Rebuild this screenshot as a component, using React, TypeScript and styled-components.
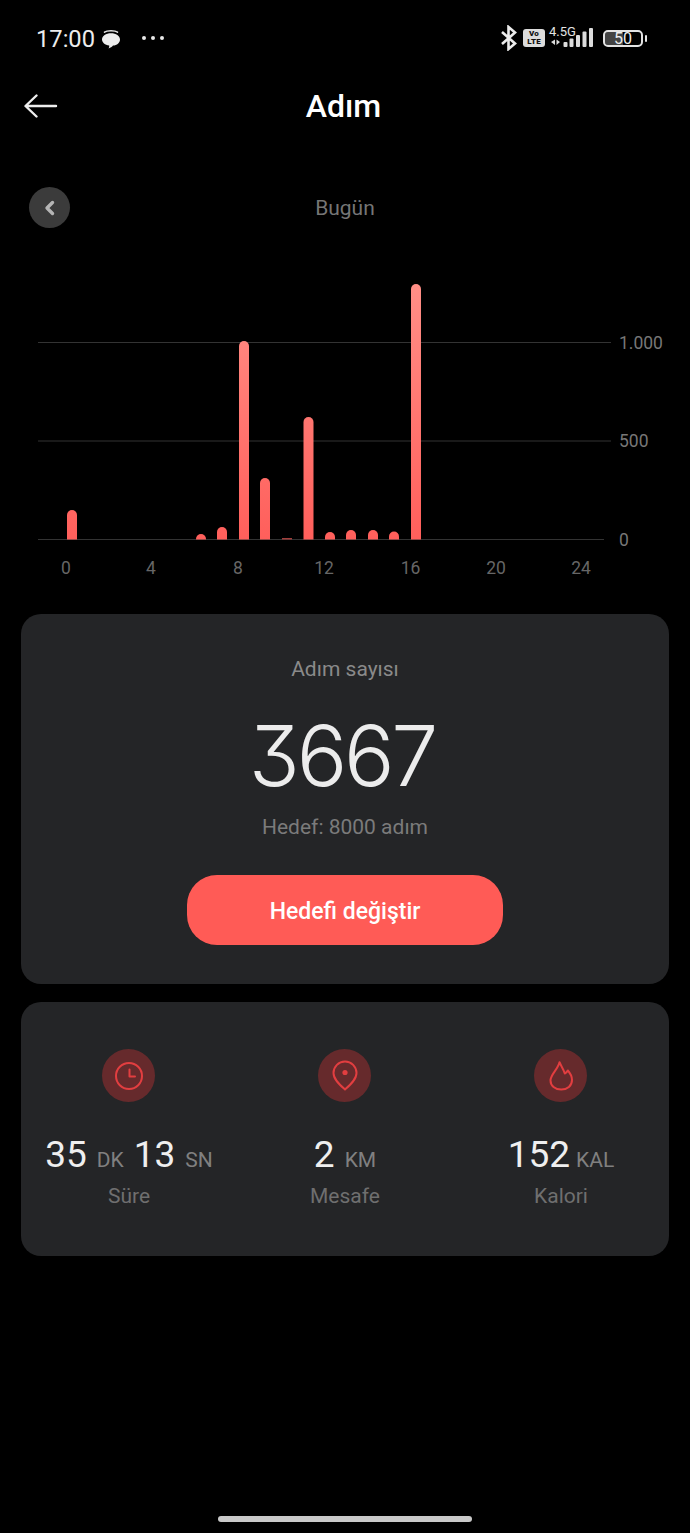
import React from "react";
import styled, { createGlobalStyle } from "styled-components";

const Global = createGlobalStyle`
  html, body { margin: 0; padding: 0; background: #000; }
  body { font-family: Roboto, "Liberation Sans", sans-serif; }
  * { box-sizing: border-box; }
`;

const Page = styled.div`
  width: 690px; height: 1533px; background: #000; display: flex; flex-direction: column; overflow: hidden;
`;
const StatusBar = styled.div`
  height: 76px; padding: 2px 47px 0 36px; display: flex; align-items: center; justify-content: space-between;
`;
const StatusLeft = styled.div`display: flex; align-items: center; color: #ececec;`;
const Time = styled.span`font-size: 23.7px; line-height: 28px; margin-right: 5px;`;
const Dots = styled.svg`margin-left: 19px; margin-top: -2px;`;
const StatusRight = styled.div`display: flex; align-items: center; margin-top: -2px;`;
const Battery = styled.div`
  width: 40px; height: 17px; border: 2px solid #e4e4e4; border-radius: 5px; position: relative; margin-left: 9px;
  background: linear-gradient(90deg, #444 50%, transparent 50%); background-clip: padding-box;
  display: flex; align-items: center; justify-content: center; color: #eee; font-size: 16px; line-height: 13px;
  &::after { content: ""; position: absolute; right: -6px; top: 3px; width: 2.5px; height: 7px; border-radius: 1px; background: #e4e4e4; }
`;
const Volte = styled.div`
  width: 22px; height: 18px; margin-left: 5px; margin-right: 2px; border-radius: 3px; background: #dcdcdc; color: #111; font-size: 8px; line-height: 8px; font-weight: 900;
  display: flex; flex-direction: column; align-items: center; justify-content: center; letter-spacing: .2px;
`;
const Nav = styled.div`
  height: 60px; position: relative; display: flex; align-items: center; justify-content: center; padding: 0 24px;
`;
const BackArrow = styled.svg`position: absolute; left: 24px; top: 17px;`;
const Title = styled.h1`
  margin: 0 3px 0 0; color: #fff; font-size: 32px; line-height: 40px; font-weight: 500;
`;
const DateRow = styled.div`
  margin-top: 51px; height: 42px; position: relative; display: flex; align-items: center; justify-content: center;
  color: #757575; font-size: 21px;
`;
const Prev = styled.div`
  position: absolute; left: 29px; top: 0; width: 41px; height: 41px; border-radius: 50%; background: #3b3b3b;
  display: flex; align-items: center; justify-content: center;
`;
const Chart = styled.svg`display: block; margin-top: 41px; flex: none;`;
const Card = styled.section<{ $h: number }>`
  margin: 0 21px; height: ${p => p.$h}px; background: #242527; border-radius: 20px; flex: none;
`;
const StepCard = styled(Card)`
  margin-top: 24px; padding-top: 43px; display: flex; flex-direction: column; align-items: center;
`;
const CardLabel = styled.div`font-size: 21px; line-height: 24px; color: #8a8a8a;`;
const BigNumber = styled.div`
  margin: 30px 6px 0 0; height: 90px; line-height: 90px; font-family: Inter, sans-serif; font-weight: 350; font-size: 84px;
  letter-spacing: -3.2px; color: #ececec; font-feature-settings: "cv09" 1, "cv03" 0;
`;
const Goal = styled(CardLabel)`margin-top: 14px; color: #7b7b7b;`;
const GoalButton = styled.button`
  margin-top: 36px; width: 316px; height: 70px; padding-top: 3px; border: 0; border-radius: 30px; background: #ff5b56; color: #fff;
  font: 500 23px Roboto, sans-serif;
`;
const StatsCard = styled(Card)`
  margin-top: 18px; padding-top: 47px; display: grid; grid-template-columns: repeat(3, 1fr); align-content: start;
`;
const Stat = styled.div`display: flex; flex-direction: column; align-items: center;`;
const IconCircle = styled.div`
  width: 53px; height: 53px; margin-left: -0.5px; border-radius: 50%; background: #662a2c; display: flex; align-items: center; justify-content: center;
`;
const ValueRow = styled.div`
  margin-top: 31px; height: 44px; display: flex; align-items: baseline; white-space: nowrap; color: #efefef; font-size: 37px; line-height: 44px;
`;
const Unit = styled.span<{ $gap?: number }>`
  font-size: 21px; color: #808080; margin-left: ${p => p.$gap ?? 10}px; margin-right: ${p => (p.$gap === undefined ? 10 : 0)}px;
`;
const UnitLast = styled(Unit)`margin-right: 0;`;
const StatLabel = styled.div`margin-top: 7px; font-size: 21px; line-height: 24px; color: #6f6f6f;`;
const Footer = styled.div`margin-top: auto; padding-bottom: 11px; display: flex; justify-content: center;`;
const HomeBar = styled.div`width: 254px; height: 6px; border-radius: 3px; background: #c9c9c9;`;

const bars: [number, number][] = [
  [72, 510], [201, 534], [222, 527], [244, 341], [265, 478], [308.5, 417],
  [330, 532], [351, 530], [373, 530], [394, 531.5], [416, 284],
];
const xLabels: [number, string][] = [[66, "0"], [151, "4"], [238, "8"], [324, "12"], [410.5, "16"], [496, "20"], [581, "24"]];
const yLabels: [number, string][] = [[343, "1.000"], [441, "500"], [539.5, "0"]];
const axisFont = "Roboto, sans-serif";

const barPath = (cx: number, top: number) => {
  const r = 5, b = 539.5;
  return `M${cx - r} ${b}V${top + r}A${r} ${r} 0 0 1 ${cx + r} ${top + r}V${b}Z`;
};

const StepChart = () => (
  <Chart width={690} height={320} viewBox="0 270 690 320">
    <defs>
      <linearGradient id="barFill" gradientUnits="userSpaceOnUse" x1="0" y1="284" x2="0" y2="540">
        <stop offset="0" stopColor="#ff8f87" />
        <stop offset="1" stopColor="#ff5f5b" />
      </linearGradient>
    </defs>
    <g stroke="#333" strokeWidth="1.2">
      <line x1="38" x2="611" y1="342.5" y2="342.5" />
      <line x1="38" x2="611" y1="441" y2="441" />
      <line x1="38" x2="604" y1="539.5" y2="539.5" />
    </g>
    <rect x="282" y="538" width="10" height="1.5" fill="#a33f3c" />
    {bars.map(([x, t]) => <path key={x} d={barPath(x, t)} fill="url(#barFill)" />)}
    <g fill="#666" fontFamily={axisFont} fontSize="17.5" textAnchor="middle">
      {xLabels.map(([x, s]) => <text key={s} x={x} y="574">{s}</text>)}
    </g>
    <g fill="#777" fontFamily={axisFont} fontSize="17.5">
      {yLabels.map(([y, s]) => <text key={s} x="619" y={y + 6}>{s}</text>)}
    </g>
  </Chart>
);

const iconRed = "#e23e40";
const ClockIcon = () => (
  <svg width="30" height="30" viewBox="0 0 30 30" fill="none" stroke={iconRed} strokeWidth="2" strokeLinecap="round" strokeLinejoin="round">
    <circle cx="15" cy="15" r="13" />
    <path d="M15.5 8.5V15.5H21" />
  </svg>
);
const PinIcon = () => (
  <svg width="28" height="32" viewBox="0 0 28 32" fill="none" stroke={iconRed} strokeWidth="2" strokeLinejoin="round">
    <path d="M14 29.5C9 25 2.5 19.5 2.5 13A11.5 11.5 0 0 1 25.5 13C25.5 19.5 19 25 14 29.5Z" />
    <circle cx="14" cy="12.5" r="2.6" fill={iconRed} stroke="none" />
  </svg>
);
const FlameIcon = () => (
  <svg width="26" height="32" viewBox="0 0 26 32" fill="none" stroke={iconRed} strokeWidth="2" strokeLinejoin="round">
    <path d="M11.5 2.2C13 6 15.5 9 16.8 13.5C18 13 19 12 19.8 10.5C22.5 13.5 24 16.5 24 20C24 25.8 19.3 29.6 13.2 29.6C7 29.6 2.5 25.6 2.5 20.5C2.5 14.5 9.5 10 11.5 2.2Z" />
  </svg>
);

export default function App() {
  return (
    <Page>
      <Global />
      <StatusBar>
        <StatusLeft>
          <Time>17:00</Time>
          <svg width="22" height="20" viewBox="0 0 22 20">
            <path d="M4.5 3.2C7 1.2 15 1.2 17.5 3.2" fill="none" stroke="#e0e0e0" strokeWidth="1.5" strokeLinecap="round" />
            <path d="M11 4.2C16 4.2 20 6.8 20 10.4C20 13.6 17 16.2 13 16.6C12 17.8 10.5 19 8.6 19.4C9.2 18.2 9.4 17.2 9.2 16.4C5 15.8 2 13.4 2 10.4C2 6.8 6 4.2 11 4.2Z" fill="#ececec" />
          </svg>
          <Dots width="24" height="6" viewBox="0 0 24 6">
            <g fill="#e8e8e8"><circle cx="3" cy="3" r="2" /><circle cx="12" cy="3" r="2" /><circle cx="21" cy="3" r="2" /></g>
          </Dots>
        </StatusLeft>
        <StatusRight>
          <svg width="18" height="26" viewBox="0 0 18 26" fill="none" stroke="#ececec" strokeWidth="2.6" strokeLinejoin="miter">
            <path d="M2 7L15 18.5L8.5 24V2L15 7.5L2 19" />
          </svg>
          <Volte><span>Vo</span><span>LTE</span></Volte>
          <svg width="47" height="26" viewBox="0 0 47 26">
            <text x="2" y="11" fill="#e4e4e4" fontFamily="Roboto, sans-serif" fontSize="13">4.5G</text>
            <g fill="#dcdcdc">
              <path d="M4 17L8 14.5V20ZM9.5 14.5L13 17L9.5 20Z" />
              <rect x="16.5" y="17" width="4" height="5" rx="1" />
              <rect x="22.5" y="13.5" width="4" height="8.5" rx="1" />
              <rect x="29" y="10" width="4" height="12" rx="1" />
              <rect x="35.5" y="6.5" width="4" height="15.5" rx="1" />
              <rect x="42" y="3" width="4" height="19" rx="1" />
            </g>
          </svg>
          <Battery>50</Battery>
        </StatusRight>
      </StatusBar>
      <Nav>
        <BackArrow width="34" height="26" viewBox="0 0 34 26" fill="none" stroke="#eeeeee" strokeWidth="2.4" strokeLinecap="round" strokeLinejoin="round">
          <path d="M32 13H2M12.5 2.5L1.5 13L12.5 23.5" />
        </BackArrow>
        <Title>Adım</Title>
      </Nav>
      <DateRow>
        <Prev>
          <svg width="12" height="16" viewBox="0 0 12 16" fill="none" stroke="#b5b5b5" strokeWidth="3.4" strokeLinecap="round" strokeLinejoin="round">
            <path d="M8.5 2.5L3 8L8.5 13.5" />
          </svg>
        </Prev>
        Bugün
      </DateRow>
      <StepChart />
      <StepCard $h={370}>
        <CardLabel>Adım sayısı</CardLabel>
        <BigNumber>3667</BigNumber>
        <Goal>Hedef: 8000 adım</Goal>
        <GoalButton>Hedefi değiştir</GoalButton>
      </StepCard>
      <StatsCard $h={254}>
        <Stat>
          <IconCircle><ClockIcon /></IconCircle>
          <ValueRow>35<Unit>DK</Unit>13<UnitLast>SN</UnitLast></ValueRow>
          <StatLabel>Süre</StatLabel>
        </Stat>
        <Stat>
          <IconCircle><PinIcon /></IconCircle>
          <ValueRow>2<UnitLast>KM</UnitLast></ValueRow>
          <StatLabel>Mesafe</StatLabel>
        </Stat>
        <Stat>
          <IconCircle><FlameIcon /></IconCircle>
          <ValueRow>152<Unit $gap={6}>KAL</Unit></ValueRow>
          <StatLabel>Kalori</StatLabel>
        </Stat>
      </StatsCard>
      <Footer><HomeBar /></Footer>
    </Page>
  );
}
